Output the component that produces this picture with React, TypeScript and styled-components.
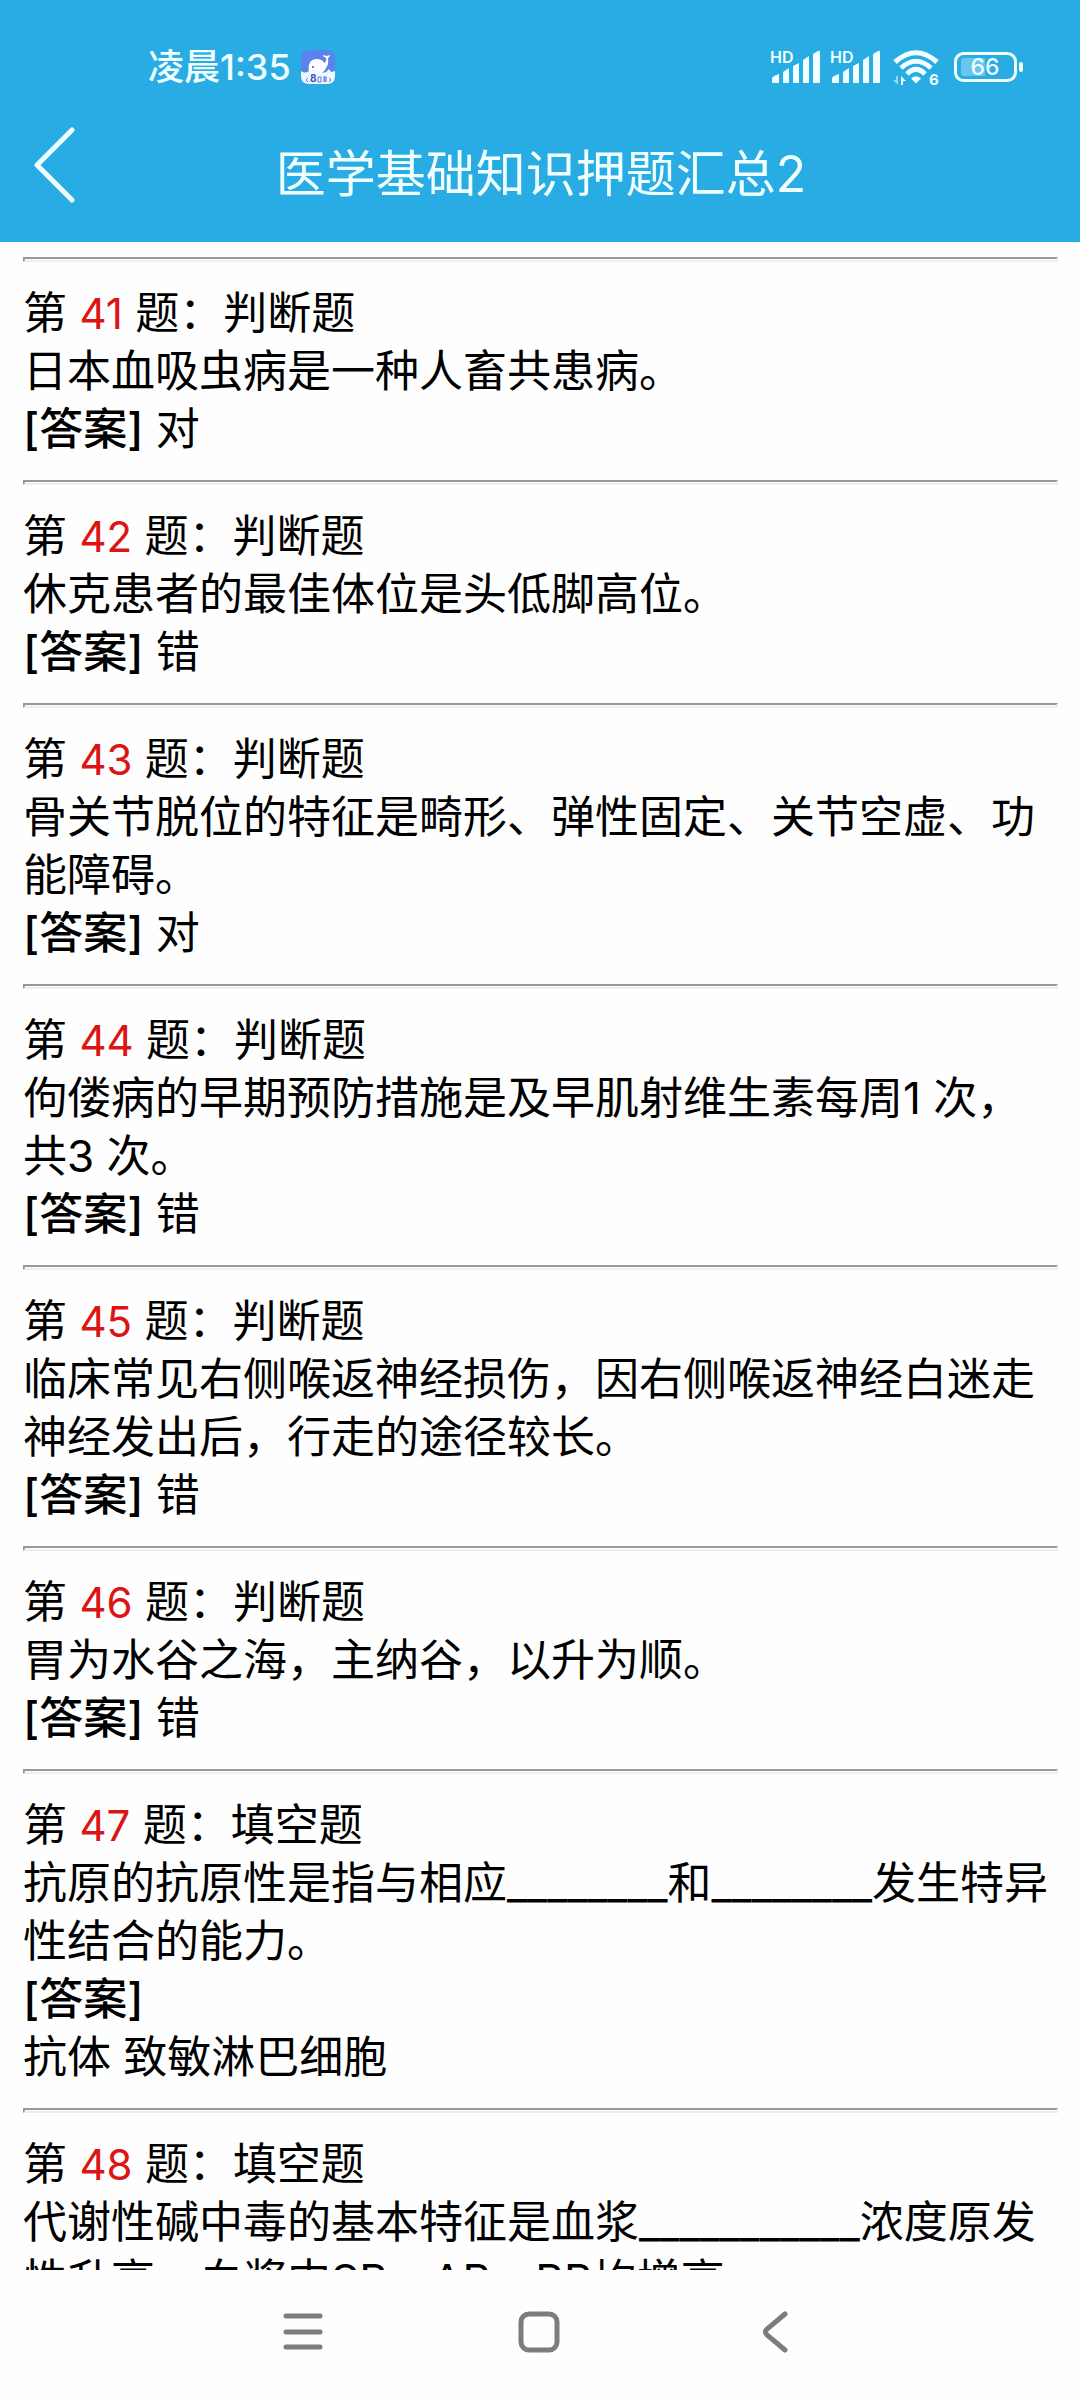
import React from "react";
import styled, { createGlobalStyle } from "styled-components";

const GlobalStyle = createGlobalStyle`
  *, *::before, *::after { box-sizing: border-box; }
  body {
    margin: 0;
    background: #fefefe;
    font-family: Inter, "Noto Sans CJK SC", sans-serif;
  }
`;

const Screen = styled.div`
  display: flex;
  flex-direction: column;
  height: 100vh;
  background: #fefefe;
  color: #000;
`;

const Top = styled.div`
  flex: none;
  background: #29abe4;
  color: #f0ffff;
`;

const StatusBar = styled.div`
  display: flex;
  align-items: center;
  justify-content: space-between;
  height: 102px;
  padding: 32px 56px 0 148px;
`;

const Clock = styled.div`
  display: flex;
  align-items: center;
  gap: 10px;
  font-size: 36px;
  font-weight: 500;
  line-height: 48px;
`;

const Indicators = styled.div`
  display: flex;
  align-items: center;
  gap: 10px;
`;

const StatusIcon = styled.svg`
  display: block;
  overflow: visible;
  font-family: Inter, sans-serif;
`;

const TitleBar = styled.header`
  display: grid;
  grid-template-columns: 140px 1fr 140px;
  align-items: center;
  height: 140px;
`;

const BackButton = styled.button`
  display: flex;
  align-items: center;
  height: 120px;
  padding: 0 0 14px 32px;
  border: 0;
  background: none;
  color: inherit;
`;

const Title = styled.h1`
  margin: 0;
  padding: 4px 0 0 2px;
  font-size: 50px;
  font-weight: 400;
  line-height: 64px;
  text-align: center;
`;

const Content = styled.main`
  flex: 1;
  min-height: 0;
  overflow: hidden;
  padding: 15px 22px 0 23px;
  font-size: 44px;
  line-height: 58px;
`;

const Question = styled.article`
  padding-bottom: 22px;
`;

const Divider = styled.hr`
  height: 5px;
  margin: 0 0 22px;
  border: 2px solid;
  border-color: #999 #eee #eee #999;
`;

const Heading = styled.h2`
  margin: 0;
  font-size: inherit;
  font-weight: 400;
`;

const Num = styled.span`
  font-size: 42px;
  line-height: 1;
  color: #dc1414;
`;

const Body = styled.p`
  margin: 0;
`;

const AnswerLabel = styled.b`
  font-weight: 500;
`;

const NavBar = styled.nav`
  flex: none;
  display: flex;
  justify-content: center;
  gap: 136px;
  height: 130px;
  padding: 0 2px 6px 0;
`;

const NavButton = styled.button`
  display: flex;
  align-items: center;
  justify-content: center;
  width: 100px;
  padding: 0;
  border: 0;
  background: none;
  color: #7d7d7d;
`;

type Item = { no: number; kind: string; text: string; answer: string; block?: boolean };

const items: Item[] = [
  { no: 41, kind: "判断题", text: "日本血吸虫病是一种人畜共患病。", answer: "对" },
  { no: 42, kind: "判断题", text: "休克患者的最佳体位是头低脚高位。", answer: "错" },
  { no: 43, kind: "判断题", text: "骨关节脱位的特征是畸形、弹性固定、关节空虚、功能障碍。", answer: "对" },
  { no: 44, kind: "判断题", text: "佝偻病的早期预防措施是及早肌射维生素每周1 次，共3 次。", answer: "错" },
  { no: 45, kind: "判断题", text: "临床常见右侧喉返神经损伤，因右侧喉返神经白迷走神经发出后，行走的途径较长。", answer: "错" },
  { no: 46, kind: "判断题", text: "胃为水谷之海，主纳谷，以升为顺。", answer: "错" },
  { no: 47, kind: "填空题", text: "抗原的抗原性是指与相应________和________发生特异性结合的能力。", answer: "抗体 致敏淋巴细胞", block: true },
  { no: 48, kind: "填空题", text: "代谢性碱中毒的基本特征是血浆___________浓度原发性升高，血浆中SB、AB、BB均增高", answer: "", block: true },
];

const Signal = () => (
  <StatusIcon width="50" height="34" viewBox="0 0 50 34" fill="currentColor">
    <text x="0" y="13" fontSize="16" fontWeight="600">HD</text>
    <path d="M2 32v-3q0-2 2-3l5-2v8q0 1-1 1H3q-1 0-1-1zM13 22l6-4v14q0 1-1 1h-4q-1 0-1-1zM23 16l6-3v19q0 1-1 1h-4q-1 0-1-1zM33 10l6-4v26q0 1-1 1h-4q-1 0-1-1zM43 4l5-3q2-1 2 1v30q0 1-1 1h-5q-1 0-1-1z" />
  </StatusIcon>
);

const Wifi = () => (
  <StatusIcon width="54" height="38" viewBox="0 0 54 38" fill="none" stroke="currentColor">
    <path d="M5 14Q26 -4.500 47 14M11 20Q26 6.500 41 20M17 26Q26 17 35 26" strokeWidth="5" />
    <path d="M21 30.500q5-4.500 10 0l-5 5z" fill="currentColor" stroke="none" />
    <path d="M8 28v9l-5-5h3v-4z" fill="#8fd8f6" stroke="none" />
    <path d="M11 37v-9l5 5h-3v4z" fill="currentColor" stroke="none" />
    <text x="39" y="37" fontSize="15" fontWeight="700" fill="currentColor" stroke="none">6</text>
  </StatusIcon>
);

const Battery = () => (
  <StatusIcon width="70" height="32" viewBox="0 0 70 32">
    <rect x="1.500" y="2.500" width="60" height="27" rx="8" fill="none" stroke="currentColor" strokeWidth="3" />
    <path d="M10 7h21v18H10q-3 0-3-3V10q0-3 3-3z" fill="#69c5ee" />
    <rect x="65" y="11" width="4" height="10" rx="2" fill="currentColor" />
    <text x="31" y="24" textAnchor="middle" fontSize="23" fontWeight="500" fill="currentColor">66</text>
  </StatusIcon>
);

const Whale = () => (
  <StatusIcon width="34" height="34" viewBox="0 0 34 34">
    <rect width="34" height="34" rx="8" fill="#5b83ee" />
    <path d="M8 22q-2-12 7-13 7 0 8 4 3-2 2-5-3-1-3-3l4 1 3-1q0 2-2 3 1 6-2 10-2 5-7 6z" fill="#fff" />
    <path d="M0 21q4 3 8 0 4-3 9 0 4 3 8 1l3-3 2 3 4-1v5q0 8-8 8H8q-8 0-8-8z" fill="#f2f8ff" />
    <circle cx="12" cy="17" r="1" fill="#3654bd" />
    <text x="9" y="32" fontSize="10" fontWeight="700" fill="#3654bd">8</text>
    <path d="M7 28l-2 2 2 2M28 28l2 2-2 2M17 27h3v5h-3zM22 27h4M22 29h4M22 31h4M24 27v5" fill="none" stroke="#5b78d0" />
  </StatusIcon>
);

export default function App() {
  return (
    <Screen>
      <GlobalStyle />
      <Top>
        <StatusBar>
          <Clock>
            <span>凌晨1:35</span>
            <Whale />
          </Clock>
          <Indicators>
            <Signal />
            <Signal />
            <Wifi />
            <Battery />
          </Indicators>
        </StatusBar>
        <TitleBar>
          <BackButton aria-label="返回">
            <svg width="44" height="76" viewBox="0 0 44 76" fill="none" stroke="currentColor" strokeWidth="5" strokeLinecap="round" strokeLinejoin="round">
              <path d="M40 3L5 38l35 35" />
            </svg>
          </BackButton>
          <Title>医学基础知识押题汇总2</Title>
        </TitleBar>
      </Top>
      <Content>
        {items.map((q) => (
          <Question key={q.no}>
            <Divider />
            <Heading>
              第 <Num>{q.no}</Num> 题：{q.kind}
            </Heading>
            <Body>{q.text}</Body>
            {q.answer && (
              <Body>
                <AnswerLabel>[答案]</AnswerLabel>
                {q.block ? <br /> : " "}
                {q.answer}
              </Body>
            )}
          </Question>
        ))}
      </Content>
      <NavBar>
        <NavButton aria-label="最近任务">
          <svg width="40" height="44" viewBox="0 0 40 44" fill="none" stroke="currentColor" strokeWidth="5" strokeLinecap="round">
            <path d="M3 6h34M3 22h34M3 37h34" />
          </svg>
        </NavButton>
        <NavButton aria-label="主屏幕">
          <svg width="42" height="42" viewBox="0 0 42 42" fill="none" stroke="currentColor" strokeWidth="5">
            <rect x="3" y="3" width="36" height="36" rx="8" />
          </svg>
        </NavButton>
        <NavButton aria-label="返回上一页">
          <svg width="28" height="42" viewBox="0 0 28 42" fill="none" stroke="currentColor" strokeWidth="5" strokeLinecap="round">
            <path d="M24 3L6 18q-3 3 0 6l18 15" />
          </svg>
        </NavButton>
      </NavBar>
    </Screen>
  );
}
